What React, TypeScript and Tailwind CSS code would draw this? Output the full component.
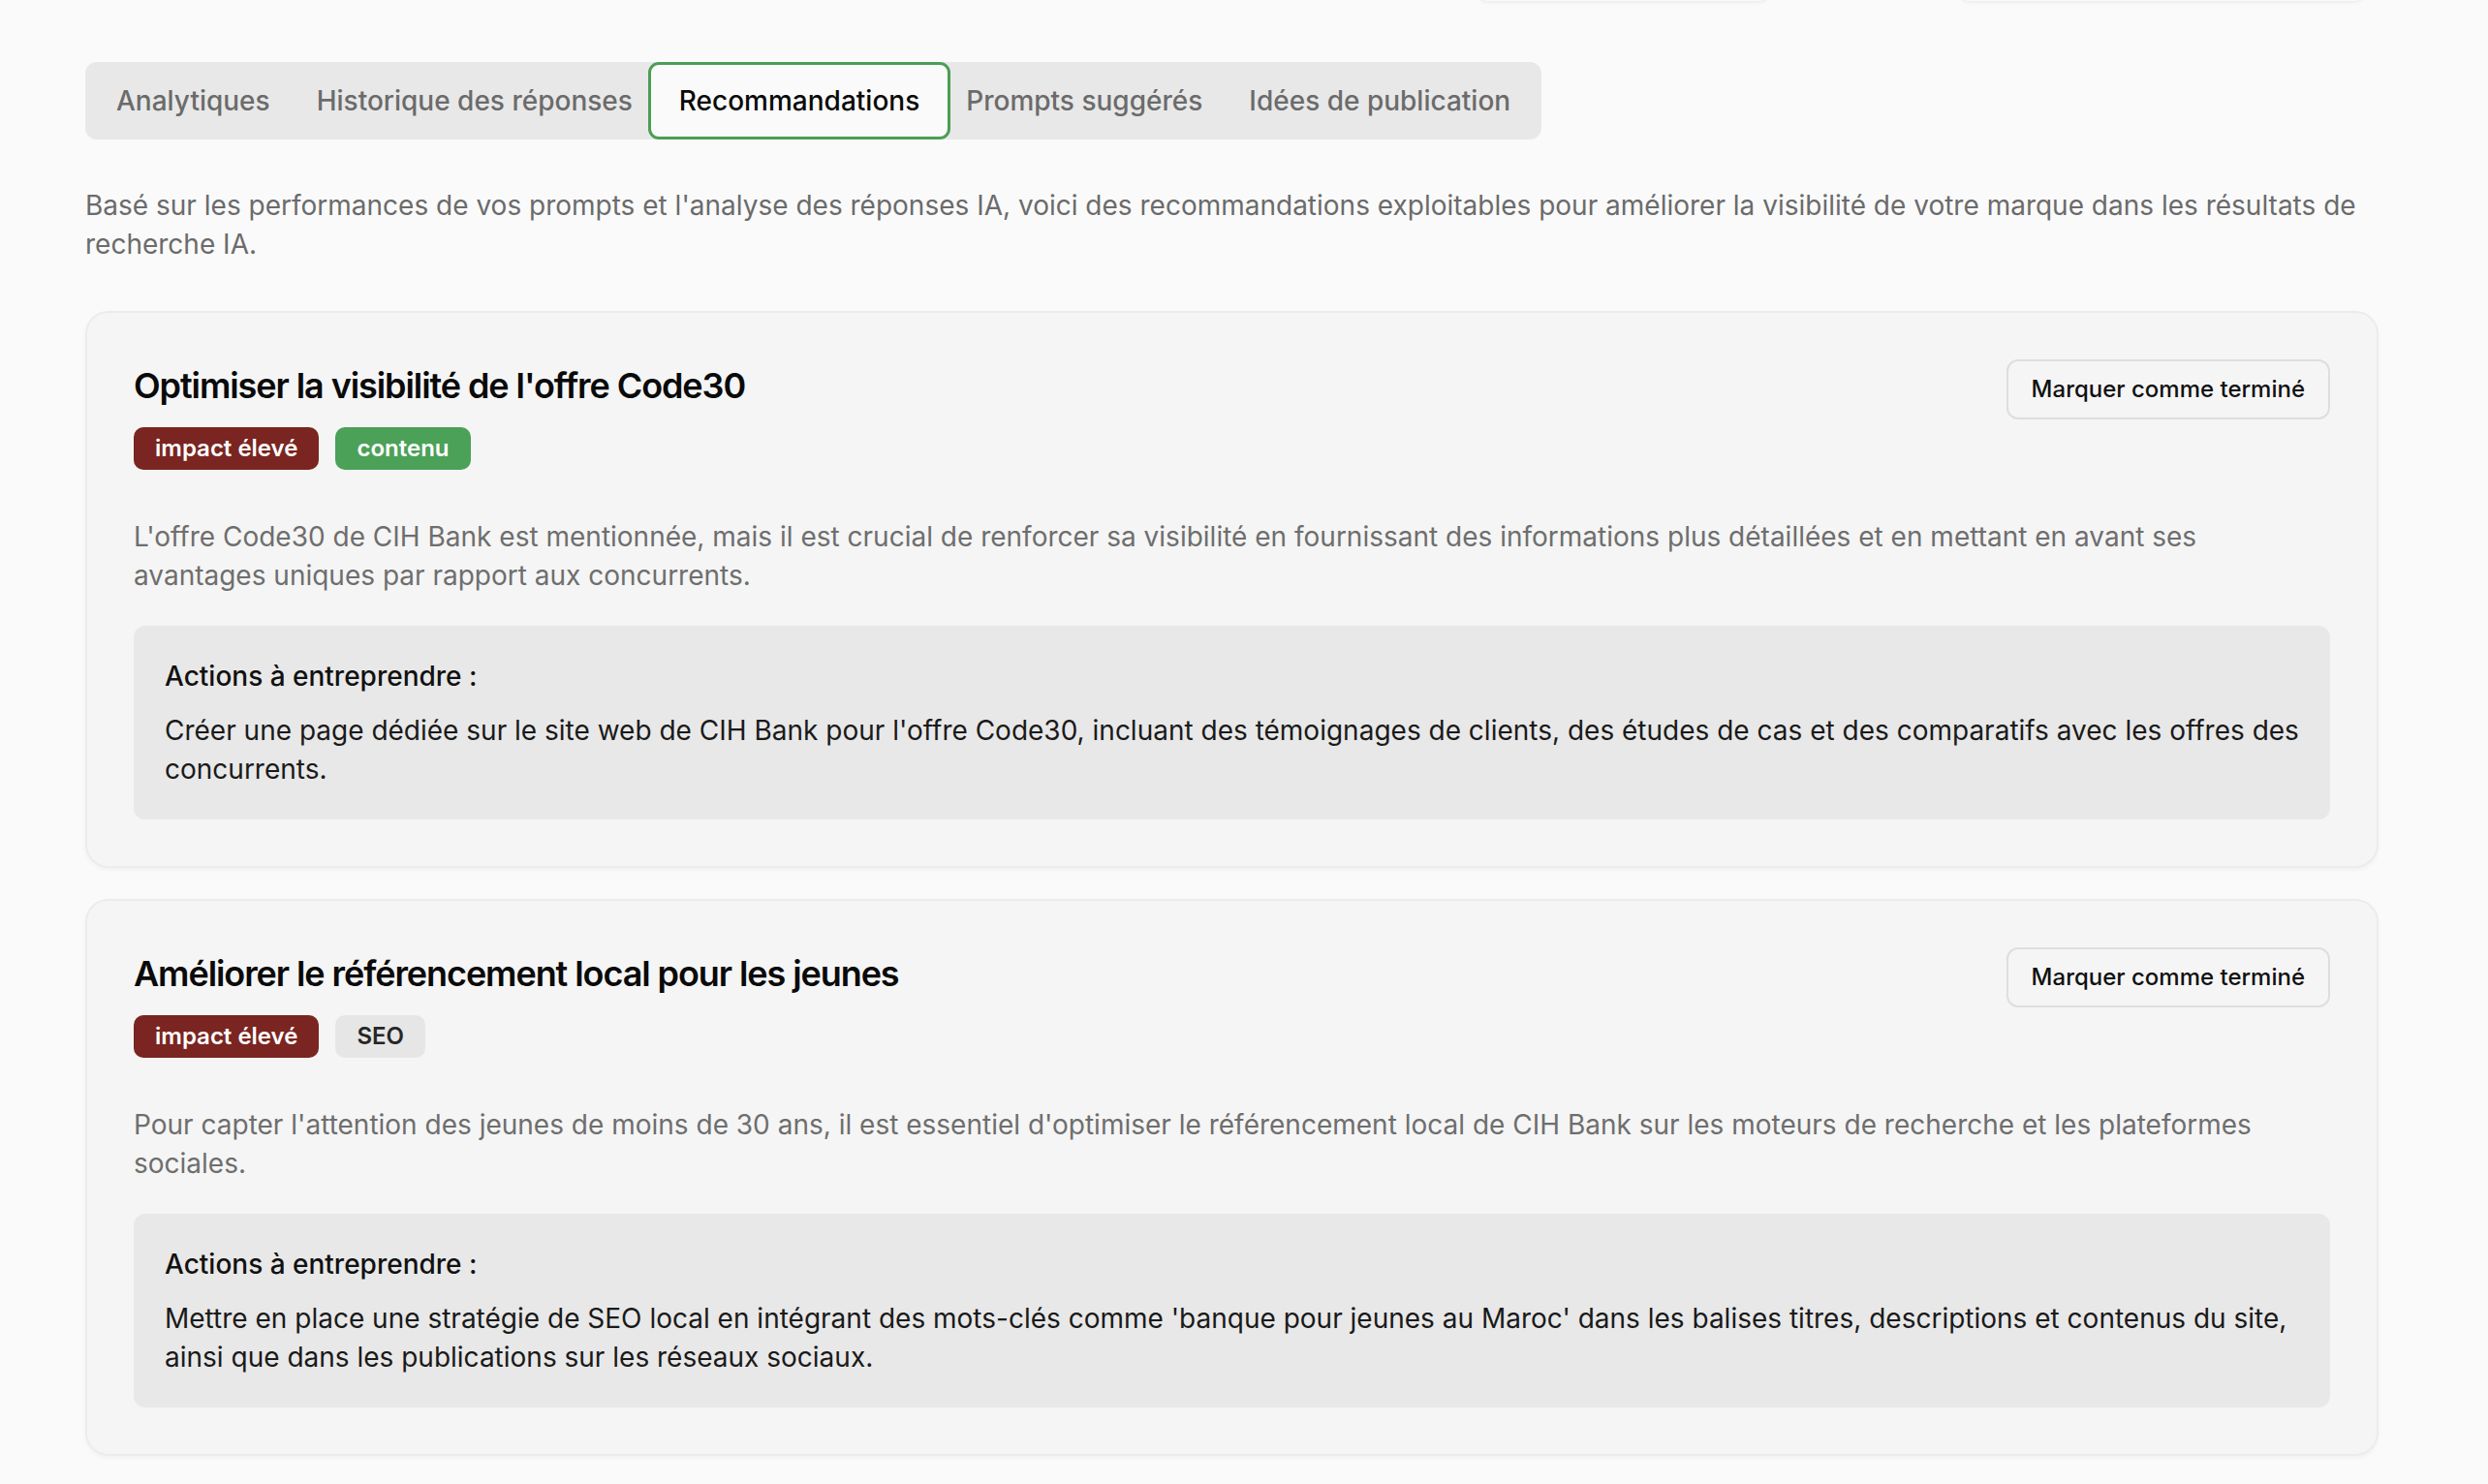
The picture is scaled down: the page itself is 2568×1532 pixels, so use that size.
import React from "react";

type Badge = { label: string; tone: "red" | "green" | "gray" };

type Recommendation = {
  title: string;
  badges: Badge[];
  description: string;
  action: string;
};

const tabs = [
  "Analytiques",
  "Historique des réponses",
  "Recommandations",
  "Prompts suggérés",
  "Idées de publication",
];

const recommendations: Recommendation[] = [
  {
    title: "Optimiser la visibilité de l'offre Code30",
    badges: [
      { label: "impact élevé", tone: "red" },
      { label: "contenu", tone: "green" },
    ],
    description:
      "L'offre Code30 de CIH Bank est mentionnée, mais il est crucial de renforcer sa visibilité en fournissant des informations plus détaillées et en mettant en avant ses avantages uniques par rapport aux concurrents.",
    action:
      "Créer une page dédiée sur le site web de CIH Bank pour l'offre Code30, incluant des témoignages de clients, des études de cas et des comparatifs avec les offres des concurrents.",
  },
  {
    title: "Améliorer le référencement local pour les jeunes",
    badges: [
      { label: "impact élevé", tone: "red" },
      { label: "SEO", tone: "gray" },
    ],
    description:
      "Pour capter l'attention des jeunes de moins de 30 ans, il est essentiel d'optimiser le référencement local de CIH Bank sur les moteurs de recherche et les plateformes sociales.",
    action:
      "Mettre en place une stratégie de SEO local en intégrant des mots-clés comme 'banque pour jeunes au Maroc' dans les balises titres, descriptions et contenus du site, ainsi que dans les publications sur les réseaux sociaux.",
  },
];

function BadgePill({ badge }: { badge: Badge }) {
  const tone =
    badge.tone === "red"
      ? "bg-[#7a2521] text-white"
      : badge.tone === "green"
      ? "bg-[#4ba158] text-white"
      : "bg-[#e6e6e6] text-[#262626]";
  return (
    <span
      className={`flex h-[44px] items-center rounded-[10px] px-[22px] text-[24px] font-semibold ${tone}`}
    >
      {badge.label}
    </span>
  );
}

function RecommendationCard({ rec }: { rec: Recommendation }) {
  return (
    <div className="rounded-[24px] border-2 border-[#ececec] bg-[#f5f5f5] p-[48px] shadow-[0_2px_4px_rgba(0,0,0,0.04)]">
      <div className="flex items-start justify-between">
        <div>
          <h3 className="text-[36px] leading-[54px] font-semibold tracking-[-0.03em] text-[#0a0a0a]">
            {rec.title}
          </h3>
          <div className="mt-[16px] flex gap-[17px]">
            {rec.badges.map((b) => (
              <BadgePill key={b.label} badge={b} />
            ))}
          </div>
        </div>
        <button className="h-[62px] rounded-[12px] border-2 border-[#dedede] bg-[#f5f5f5] px-[24px] text-[24px] font-medium text-[#111111]">
          Marquer comme terminé
        </button>
      </div>
      <p className="mt-[49px] text-[28px] leading-[40px] text-[#6e6e6e]">
        {rec.description}
      </p>
      <div className="mt-[32px] rounded-[12px] bg-[#e8e8e8] p-[32px]">
        <h4 className="text-[28px] leading-[40px] font-medium text-[#111111]">
          Actions à entreprendre :
        </h4>
        <p className="mt-[16px] text-[28px] leading-[40px] text-[#1a1a1a]">
          {rec.action}
        </p>
      </div>
    </div>
  );
}

export default function App() {
  const active = "Recommandations";
  return (
    <div className="min-h-screen bg-[#fafafa] font-['Inter',sans-serif]">
      <div className="ml-[88px] w-[2367px] pb-[40px]">
        {/* filter controls sitting above the fold */}
        <div className="flex h-[64px] items-start justify-end gap-[194px] pr-[13px]">
          <div className="mt-[-60px] h-[61px] w-[303px] rounded-[12px] bg-[#fafafa] shadow-[0_1px_4px_rgba(0,0,0,0.08)]" />
          <div className="mt-[-60px] h-[61px] w-[421px] rounded-[12px] bg-[#fafafa] shadow-[0_1px_4px_rgba(0,0,0,0.08)]" />
        </div>

        <div className="inline-flex h-[80px] items-stretch rounded-[12px] bg-[#e8e8e8] px-[8px]">
          {tabs.map((t) =>
            t === active ? (
              <button
                key={t}
                className="mx-[-8px] flex items-center rounded-[11px] border-[3px] border-[#4a9e55] bg-[#fafafa] px-[29px] text-[28px] font-medium text-[#0a0a0a]"
              >
                {t}
              </button>
            ) : (
              <button
                key={t}
                className="flex items-center px-[24px] text-[28px] font-medium text-[#6b6b6b]"
              >
                {t}
              </button>
            )
          )}
        </div>

        <p className="mt-[48px] text-[28px] leading-[40px] text-[#6b6b6b]">
          Basé sur les performances de vos prompts et l'analyse des réponses IA, voici des recommandations exploitables pour améliorer la visibilité de votre marque dans les résultats de recherche IA.
        </p>

        <div className="mt-[49px] flex flex-col gap-[32px]">
          {recommendations.map((r) => (
            <RecommendationCard key={r.title} rec={r} />
          ))}
        </div>
      </div>
    </div>
  );
}
